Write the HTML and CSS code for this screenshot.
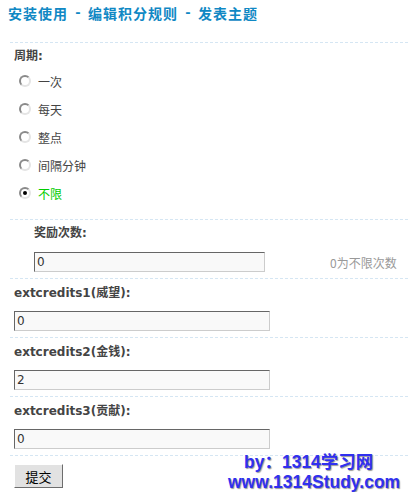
FILE: index.html
```html
<!DOCTYPE html>
<html lang="zh-CN">
<head>
<meta charset="utf-8">
<title>编辑积分规则</title>
<link rel="stylesheet" href="styles.css">
</head>
<body>
<div class="page">
  <div class="crumb">
    <a class="crumb-link">安装使用</a><span class="sep">-</span><a class="crumb-link">编辑积分规则</a><span class="sep">-</span><a class="crumb-link">发表主题</a>
  </div>
  <form class="form">
    <div class="sec sec-period">
      <div class="label">周期:</div>
      <ul class="choices">
        <li class="choice"><input class="radio" type="radio" name="cycle"><span>一次</span></li>
        <li class="choice"><input class="radio" type="radio" name="cycle"><span>每天</span></li>
        <li class="choice"><input class="radio" type="radio" name="cycle"><span>整点</span></li>
        <li class="choice"><input class="radio" type="radio" name="cycle"><span>间隔分钟</span></li>
        <li class="choice choice-on"><input class="radio" type="radio" name="cycle" checked><span>不限</span></li>
      </ul>
    </div>
    <div class="sec sec-reward">
      <div class="label">奖励次数:</div>
      <div class="field"><input class="txt txt-reward" type="text" value="0"><span class="note">0为不限次数</span></div>
    </div>
    <div class="sec">
      <div class="label">extcredits1(威望):</div>
      <div class="field"><input class="txt" type="text" value="0"></div>
    </div>
    <div class="sec">
      <div class="label">extcredits2(金钱):</div>
      <div class="field"><input class="txt" type="text" value="2"></div>
    </div>
    <div class="sec">
      <div class="label">extcredits3(贡献):</div>
      <div class="field"><input class="txt" type="text" value="0"></div>
    </div>
    <div class="sec sec-submit">
      <button class="btn" type="button">提交</button>
    </div>
  </form>
  <div class="watermark">
    <div class="wm1">by：1314学习网</div>
    <div class="wm2">www.1314Study.com</div>
  </div>
</div>
</body>
</html>
```

FILE: styles.css
```css
html, body {
  margin: 0;
  padding: 0;
  background: #ffffff;
}
body {
  font-family: "Noto Sans CJK SC", sans-serif;
  font-size: 12px;
  color: #444444;
}
.page {
  position: relative;
  width: 408px;
  height: 492px;
  overflow: hidden;
}
.crumb {
  display: flex;
  box-sizing: border-box;
  height: 42px;
  padding: 3px 0 0 8px;
  line-height: 20px;
  font-size: 14px;
  font-weight: bold;
  color: #1088c4;
}
.crumb-link {
  letter-spacing: 1px;
  white-space: nowrap;
}
.sep {
  width: 20px;
  text-align: center;
  font-family: "DejaVu Sans", sans-serif;
  font-size: 13px;
}
.form {
  margin: 0 0 0 10px;
}
.sec {
  border-top: 1px dashed #d5e6f3;
  padding: 4px 0 6px 4px;
}
.label {
  line-height: 20px;
  font-weight: bold;
  color: #444444;
  font-family: "DejaVu Sans", "Noto Sans CJK SC", sans-serif;
  font-size: 12px;
  white-space: nowrap;
}
.sec-period {
  padding: 3px 0 12px 4px;
}
.choices {
  list-style: none;
  margin: 1px 0 0 0;
  padding: 0;
}
.choice {
  display: flex;
  align-items: center;
  height: 28px;
  color: #444444;
}
.choice-on {
  color: #00cc00;
}
.radio {
  appearance: none;
  -webkit-appearance: none;
  box-sizing: border-box;
  width: 12px;
  height: 12px;
  margin: 0 7px 0 5px;
  border-radius: 50%;
  border: 2px solid;
  border-color: #8a8a8a #e4e4e4 #e4e4e4 #8a8a8a;
  background: #ffffff;
  position: relative;
}
.radio:checked::after {
  content: "";
  position: absolute;
  left: 2px;
  top: 2px;
  width: 4px;
  height: 4px;
  border-radius: 50%;
  background: #000000;
}
.sec-reward {
  padding: 3px 0 6px 24px;
}
.sec-reward .field {
  margin-top: 9px;
}
.field {
  display: flex;
  align-items: center;
  height: 20px;
  margin-top: 8px;
}
.txt {
  box-sizing: border-box;
  width: 256px;
  height: 20px;
  margin: 0;
  padding: 0 2px;
  border: 1px solid;
  border-color: #666666 #cccccc #cccccc #666666;
  background: #f9f9f9;
  font-family: "DejaVu Sans", sans-serif;
  font-size: 12px;
  color: #333333;
  outline: none;
}
.txt-reward {
  width: 231px;
}
.note {
  margin-left: 65px;
  color: #999999;
  white-space: nowrap;
}
.sec-submit {
  padding: 8px 0 6px 4px;
}
.btn {
  box-sizing: border-box;
  width: 49px;
  height: 24px;
  margin: 0;
  padding: 0;
  border: 1px solid;
  border-color: #ffffff #6d6d6d #6d6d6d #ffffff;
  background: #e2e2e2;
  font-family: "Noto Sans CJK SC", sans-serif;
  font-size: 13px;
  color: #000000;
}
.watermark {
  position: absolute;
  left: 228px;
  top: 452px;
  font-family: "Liberation Sans", "Noto Sans CJK SC", sans-serif;
  font-weight: bold;
  font-size: 17.5px;
  line-height: 20px;
  color: #3030f0;
  text-shadow: 1px 1px 1px #9a9a9a;
  white-space: nowrap;
}
.wm1 {
  padding-left: 16px;
}
```
